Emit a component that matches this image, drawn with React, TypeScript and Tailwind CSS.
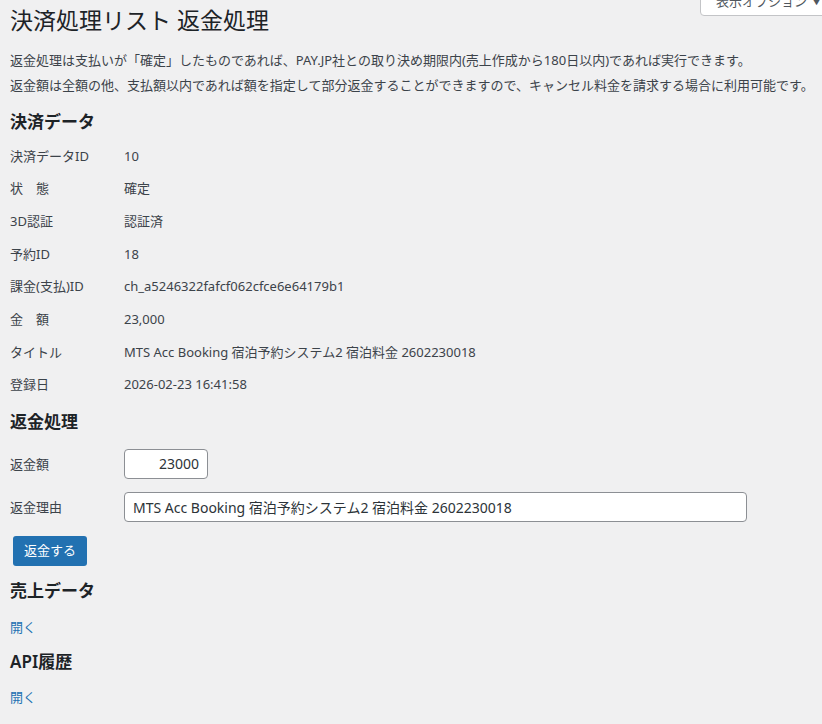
import React from 'react'

const rows: [string, string][] = [
  ['決済データID', '10'],
  ['状　態', '確定'],
  ['3D認証', '認証済'],
  ['予約ID', '18'],
  ['課金(支払)ID', 'ch_a5246322fafcf062cfce6e64179b1'],
  ['金　額', '23,000'],
  ['タイトル', 'MTS Acc Booking 宿泊予約システム2 宿泊料金 2602230018'],
  ['登録日', '2026-02-23 16:41:58'],
]

function SectionTitle({ children, className = '' }: { children: React.ReactNode; className?: string }) {
  return <h2 className={`text-[17px] leading-[24px] font-semibold text-[#1d2327] ${className}`}>{children}</h2>
}

export default function App() {
  return (
    <div className="relative min-h-[724px] bg-[#f0f0f1] text-[13px] text-[#3c434a] font-['Noto_Sans','Noto_Sans_CJK_JP',sans-serif] overflow-hidden">
      {/* screen options tab */}
      <button className="absolute top-[-14px] left-[700px] h-[30px] flex items-center gap-[5px] pl-[15px] pr-[8px] bg-white border border-[#c3c4c7] rounded-b-[4px] text-[13px] text-[#50575e] whitespace-nowrap">
        <span className="pt-[1px]">表示オプション</span>
        <span className="pt-[1px] text-[9px]">▼</span>
      </button>

      <div className="px-[10px] pt-[5px] pb-[20px]">
        <h1 className="text-[23px] leading-[30px] font-normal text-[#1d2327]">決済処理リスト 返金処理</h1>

        <div className="mt-[13px] leading-[25px] whitespace-nowrap">
          <p>返金処理は支払いが「確定」したものであれば、PAY.JP社との取り決め期限内(売上作成から180日以内)であれば実行できます。</p>
          <p>返金額は全額の他、支払額以内であれば額を指定して部分返金することができますので、キャンセル料金を請求する場合に利用可能です。</p>
        </div>

        <SectionTitle className="mt-[12px]">決済データ</SectionTitle>
        <div className="mt-[6px] grid grid-cols-[114px_1fr]">
          {rows.map(([k, v]) => (
            <React.Fragment key={k}>
              <div className="h-[32.7px] flex items-center">{k}</div>
              <div className="h-[32.7px] flex items-center">{v}</div>
            </React.Fragment>
          ))}
        </div>

        <SectionTitle className="mt-[8px]">返金処理</SectionTitle>
        <div className="mt-[15px] flex flex-col gap-[13px]">
          <div className="flex items-center">
            <label className="w-[114px] pt-[3px]">返金額</label>
            <input
              defaultValue="23000"
              className="w-[84px] h-[30px] px-[8px] text-right text-[14px] text-[#2c3338] bg-white border border-[#8c8f94] rounded-[4px] outline-none"
            />
          </div>
          <div className="flex items-center">
            <label className="w-[114px] pt-[3px]">返金理由</label>
            <input
              defaultValue="MTS Acc Booking 宿泊予約システム2 宿泊料金 2602230018"
              className="w-[623px] h-[30px] px-[8px] text-[14px] text-[#2c3338] bg-white border border-[#8c8f94] rounded-[4px] outline-none"
            />
          </div>
        </div>
        <button className="mt-[14px] ml-[3px] h-[30px] w-[74px] bg-[#2271b1] text-white text-[13px] rounded-[3px]">返金する</button>

        <SectionTitle className="mt-[13px]">売上データ</SectionTitle>
        <div className="mt-[14px] leading-[20px]">
          <a className="text-[#2271b1] cursor-pointer">開く</a>
        </div>

        <SectionTitle className="mt-[13px]">API履歴</SectionTitle>
        <div className="mt-[13px] leading-[20px]">
          <a className="text-[#2271b1] cursor-pointer">開く</a>
        </div>
      </div>
    </div>
  )
}
